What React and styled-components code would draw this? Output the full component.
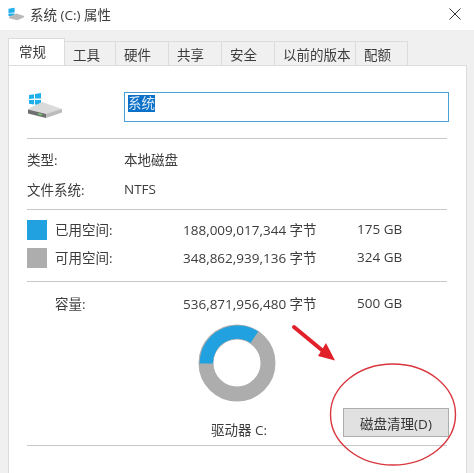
import styled, { createGlobalStyle } from 'styled-components';

const GlobalStyle = createGlobalStyle`
  html, body {
    margin: 0;
    padding: 0;
    background: #fff;
  }
  body {
    font-family: 'Open Sans', 'Noto Sans CJK SC', sans-serif;
    font-size: 13.5px;
    color: #3c3c3c;
  }
`;

const tabs = [
  { label: '常规', width: 57, active: true },
  { label: '工具', width: 51 },
  { label: '硬件', width: 53 },
  { label: '共享', width: 53 },
  { label: '安全', width: 53 },
  { label: '以前的版本', width: 81 },
  { label: '配额', width: 52 },
];

function DriveIcon() {
  return (
    <svg width="36" height="27" viewBox="0 0 36 27">
      <path d="M2 3 7 2.2V6.6L2 7Z" fill="#1fb0ec" />
      <path d="M8 2 14 1V6.6L8 6.6Z" fill="#1fb0ec" />
      <path d="M2 8 7 8V12.4L2 11.8Z" fill="#1fb0ec" />
      <path d="M8 8H14V13.4L8 12.6Z" fill="#1fb0ec" />
      <path d="M1 17 15 10 35 17 35 19 19 24 1 20Z" fill="#dadada" />
      <path d="M1 17.5 19 22 19 26 1 21.5Z" fill="#6f6f6f" />
      <path d="M19 22 35 17V20.5L19 26Z" fill="#bcbcbc" />
      <path d="M11 21 15 22V23.4L11 22.4Z" fill="#6fd06f" />
    </svg>
  );
}

function CloseIcon() {
  return (
    <svg width="12" height="12" viewBox="0 0 12 12">
      <path d="M0.5 0.5 11.5 11.5M11.5 0.5 0.5 11.5" stroke="#333" strokeWidth="1" fill="none" />
    </svg>
  );
}

function Donut() {
  return (
    <svg width="78" height="78" viewBox="0 0 78 78">
      <circle cx="39" cy="39" r="31" fill="none" stroke="#adadad" strokeWidth="15" />
      <path d="M1.6 39.5 A38 38 0 0 1 60.3 7.6 L52.5 19 A24 24 0 0 0 15 39.5 Z" fill="#22a1e0" />
    </svg>
  );
}

export default function App() {
  return (
    <>
      <GlobalStyle />
      <Window>
        <TitleBar>
          <TitleIcon>
            <svg width="17" height="14" viewBox="0 0 36 28">
              <path d="M1 3 14 1V11L1 12Z" fill="#1fb0ec" />
              <path d="M1 13H14V20L1 18Z" fill="#1fb0ec" />
              <path d="M2 20 18 13 34 18 34 21 20 27 2 23Z" fill="#b9b9b9" />
            </svg>
          </TitleIcon>
          <TitleText>系统 (C:) 属性</TitleText>
          <CloseButton>
            <CloseIcon />
          </CloseButton>
        </TitleBar>

        <Body>
          <TabBar>
            {tabs.map((tab) => (
              <Tab key={tab.label} $active={tab.active} $width={tab.width}>
                {tab.label}
              </Tab>
            ))}
          </TabBar>

          <Panel>
            <NameRow>
              <IconCell>
                <DriveIcon />
              </IconCell>
              <NameInput>
                <Selected>系统</Selected>
              </NameInput>
            </NameRow>

            <Divider />

            <InfoBlock>
              <InfoRow>
                <InfoLabel>类型:</InfoLabel>
                <Amount>本地磁盘</Amount>
              </InfoRow>
              <InfoRow>
                <InfoLabel>文件系统:</InfoLabel>
                <Amount>NTFS</Amount>
              </InfoRow>
            </InfoBlock>

            <Divider />

            <SpaceBlock>
              <SpaceRow>
                <Swatch $color="#22a1e0" />
                <SpaceLabel>已用空间:</SpaceLabel>
                <Bytes>188,009,017,344 字节</Bytes>
                <Amount>175 GB</Amount>
              </SpaceRow>
              <SpaceRow>
                <Swatch $color="#adadad" />
                <SpaceLabel>可用空间:</SpaceLabel>
                <Bytes>348,862,939,136 字节</Bytes>
                <Amount>324 GB</Amount>
              </SpaceRow>
            </SpaceBlock>

            <Divider />

            <CapacityRow>
              <SwatchGap />
              <SpaceLabel>容量:</SpaceLabel>
              <Bytes>536,871,956,480 字节</Bytes>
              <Amount>500 GB</Amount>
            </CapacityRow>

            <DonutRow>
              <Donut />
            </DonutRow>

            <DriveRow>
              <DriveLabel>驱动器 C:</DriveLabel>
              <CleanButton>磁盘清理(D)</CleanButton>
            </DriveRow>

            <Divider />
          </Panel>
        </Body>

        <Annotation viewBox="0 0 474 473" width="474" height="473">
          <path d="M294 327 L323 351" stroke="#e2202a" strokeWidth="4" strokeLinecap="round" fill="none" />
          <path d="M335 360.5 L318 356 L326 343 Z" fill="#e2202a" />
          <ellipse cx="393" cy="414.5" rx="62.5" ry="50.5" fill="none" stroke="#d9363e" strokeWidth="1.4" />
        </Annotation>
      </Window>
    </>
  );
}

const Window = styled.div`
  position: relative;
  width: 474px;
  height: 473px;
  overflow: hidden;
  background: #fff;
  filter: blur(0.35px);
`;

const TitleBar = styled.div`
  display: flex;
  align-items: center;
  height: 30px;
  padding: 0 13px 3px 8px;
  box-sizing: border-box;
  background: #fff;
`;

const TitleIcon = styled.span`
  display: flex;
  width: 22px;
`;

const TitleText = styled.span`
  flex: 1;
`;

const CloseButton = styled.span`
  display: flex;
`;

const Body = styled.div`
  height: 443px;
  padding: 11px 7px 0 8px;
  box-sizing: border-box;
  background: #f0f0f0;
`;

const TabBar = styled.div`
  display: flex;
  align-items: flex-end;
  height: 24px;
`;

const Tab = styled.div`
  display: flex;
  align-items: center;
  width: ${(p) => p.$width}px;
  height: ${(p) => (p.$active ? 27 : 24)}px;
  box-sizing: border-box;
  background: ${(p) => (p.$active ? '#fff' : '#f0f0f0')};
  border: 1px solid #dcdcdc;
  border-bottom: none;
  border-left-width: ${(p) => (p.$active ? 1 : 0)}px;
  padding: 0 0 ${(p) => (p.$active ? 3 : 0)}px ${(p) => (p.$active ? 10 : 8)}px;
  position: relative;
  z-index: ${(p) => (p.$active ? 1 : 0)};
  white-space: nowrap;
`;

const Panel = styled.div`
  height: 408px;
  padding: 26px 19px 0 18px;
  box-sizing: border-box;
  background: #fff;
  border: 1px solid #dcdcdc;
  border-bottom: none;
`;

const NameRow = styled.div`
  display: flex;
  align-items: flex-start;
  height: 30px;
  margin-bottom: 16px;
`;

const IconCell = styled.div`
  width: 97px;
  flex-shrink: 0;
`;

const NameInput = styled.div`
  flex: 1;
  height: 30px;
  margin-right: -2px;
  padding: 2px 3px;
  box-sizing: border-box;
  border: 1px solid #4a9fd4;
`;

const Selected = styled.span`
  display: block;
  width: fit-content;
  line-height: 17px;
  background: #0a70c8;
  color: #d8e8f5;
`;

const Divider = styled.div`
  height: 1px;
  background: #c8c8c8;
`;

const InfoBlock = styled.div`
  display: flex;
  flex-direction: column;
  gap: 10px;
  padding: 11px 0 9px;
`;

const InfoRow = styled.div`
  display: flex;
  align-items: center;
  height: 20px;
`;

const Amount = styled.span`
  margin-bottom: 2px;
`;

const InfoLabel = styled(Amount)`
  width: 97px;
`;

const SpaceBlock = styled.div`
  display: flex;
  flex-direction: column;
  gap: 8px;
  padding: 10px 0 13px;
`;

const SpaceRow = styled.div`
  display: flex;
  align-items: center;
  height: 20px;
`;

const Swatch = styled.span`
  width: 20px;
  height: 20px;
  margin-right: 8px;
  background: ${(p) => p.$color};
`;

const SwatchGap = styled.span`
  width: 28px;
`;

const SpaceLabel = styled(Amount)`
  width: 128px;
`;

const Bytes = styled(Amount)`
  width: 174px;
`;

const CapacityRow = styled(SpaceRow)`
  margin-top: 12px;
`;

const DonutRow = styled.div`
  display: flex;
  justify-content: center;
  padding-top: 10px;
  height: 78px;
`;

const DriveRow = styled.div`
  display: flex;
  align-items: flex-end;
  justify-content: space-between;
  height: 43px;
  padding-bottom: 8px;
  box-sizing: border-box;
`;

const DriveLabel = styled.span`
  margin: 0 0 -2px 184px;
  line-height: 18px;
`;

const CleanButton = styled.button`
  width: 106px;
  height: 29px;
  margin-right: -2px;
  padding: 0;
  background: #e1e1e1;
  border: 1px solid #adadad;
  color: #333;
  font: inherit;
`;

const Annotation = styled.svg`
  position: absolute;
  top: 0;
  left: 0;
  pointer-events: none;
`;
